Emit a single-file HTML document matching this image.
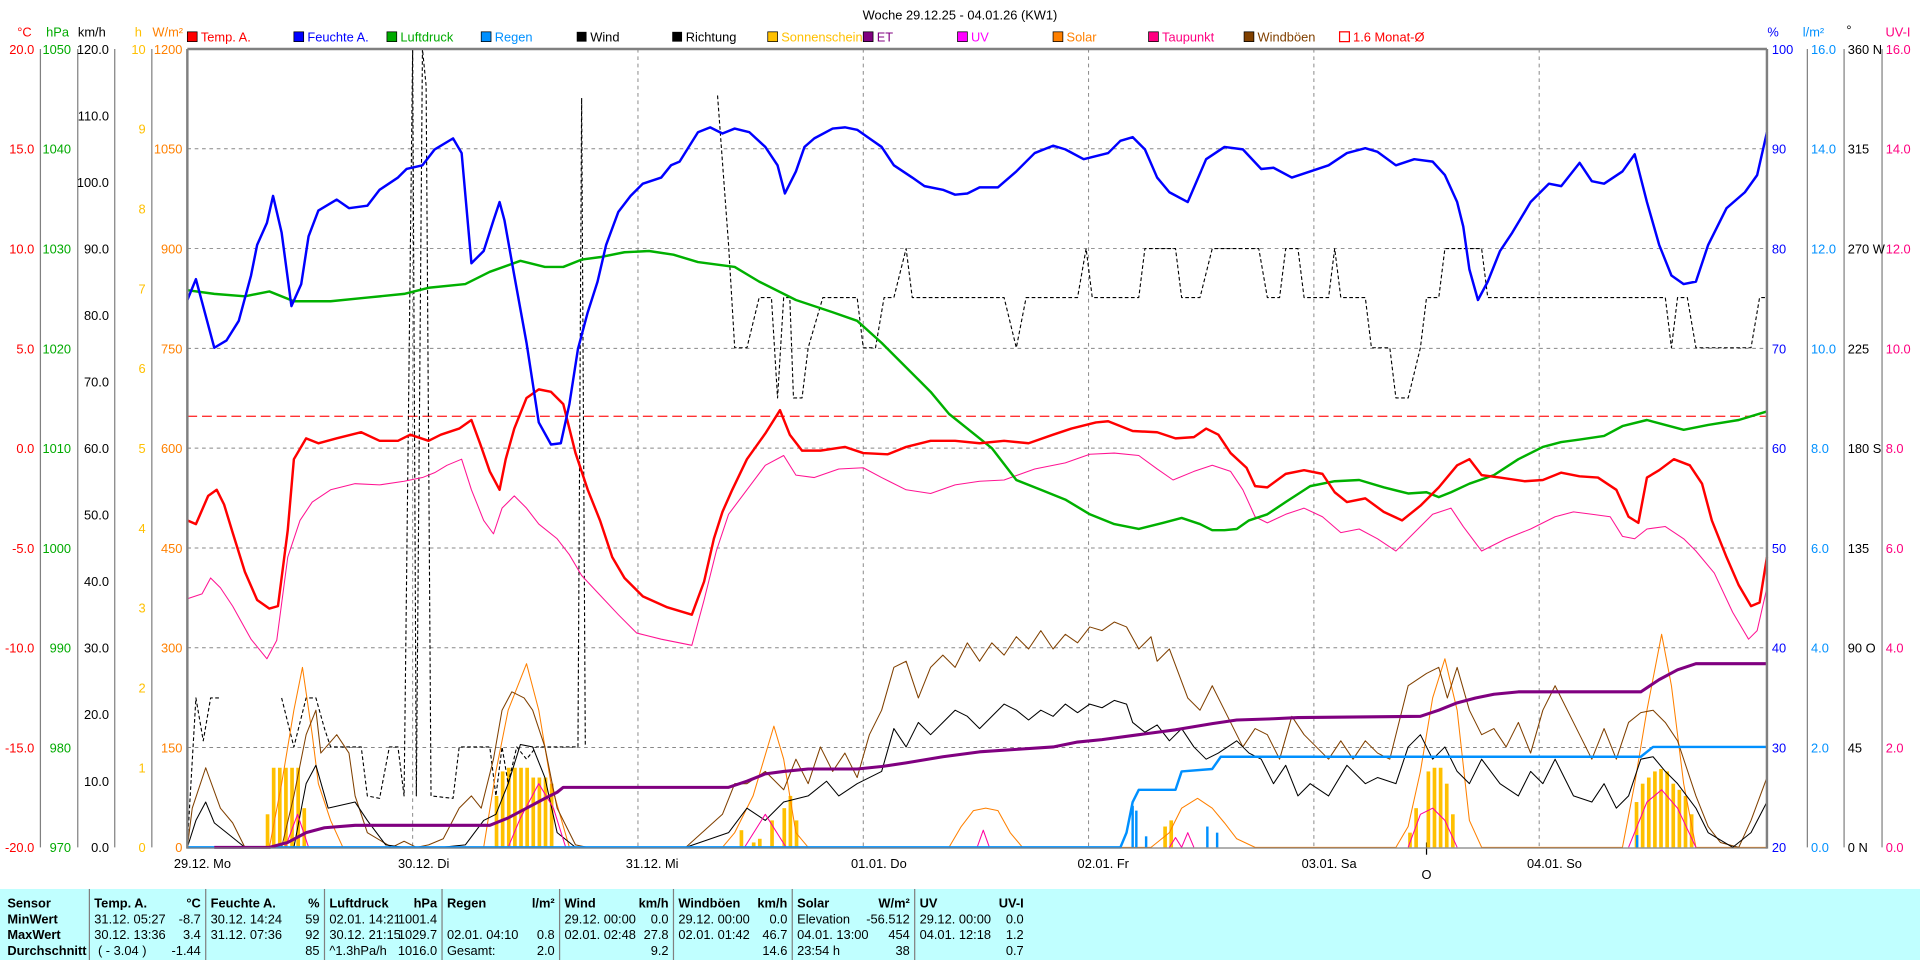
<!DOCTYPE html>
<html><head><meta charset="utf-8"><style>
html,body{margin:0;padding:0;background:#fff;width:1920px;height:960px;overflow:hidden}
svg{display:block}
text{font-family:"Liberation Sans",sans-serif;font-size:10.5px}
</style></head><body>
<svg width="1920" height="960" viewBox="0 0 1568 784" xmlns="http://www.w3.org/2000/svg">
<rect width="1568" height="784" fill="#fff"/>
<text x="784" y="16" text-anchor="middle" font-size="12" fill="#000">Woche 29.12.25 - 04.01.26 (KW1)</text>
<g font-size="10">
<text x="20" y="30" fill="#f00" text-anchor="middle">°C</text>
<text x="47" y="30" fill="#0a0" text-anchor="middle">hPa</text>
<text x="75" y="30" fill="#000" text-anchor="middle">km/h</text>
<text x="113" y="30" fill="#ffc000" text-anchor="middle">h</text>
<text x="137" y="30" fill="#ff8000" text-anchor="middle">W/m²</text>
<text x="1448" y="30" fill="#00f" text-anchor="middle">%</text>
<text x="1481" y="30" fill="#0090ff" text-anchor="middle">l/m²</text>
<text x="1510" y="28" fill="#000" text-anchor="middle">°</text>
<text x="1550" y="30" fill="#ff0080" text-anchor="middle">UV-I</text>
</g>
<g font-size="10">
<rect x="153" y="26" width="8" height="8" fill="#f00" stroke="#000" stroke-width=".6"/><text x="164" y="34" fill="#f00">Temp. A.</text>
<rect x="240" y="26" width="8" height="8" fill="#00f" stroke="#000" stroke-width=".6"/><text x="251" y="34" fill="#00f">Feuchte A.</text>
<rect x="316" y="26" width="8" height="8" fill="#0a0" stroke="#000" stroke-width=".6"/><text x="327" y="34" fill="#0a0">Luftdruck</text>
<rect x="393" y="26" width="8" height="8" fill="#0090ff" stroke="#000" stroke-width=".6"/><text x="404" y="34" fill="#0090ff">Regen</text>
<rect x="471" y="26" width="8" height="8" fill="#000"/><text x="482" y="34" fill="#000">Wind</text>
<rect x="549" y="26" width="8" height="8" fill="#000"/><text x="560" y="34" fill="#000">Richtung</text>
<rect x="627" y="26" width="8" height="8" fill="#ffc000" stroke="#000" stroke-width=".6"/><text x="638" y="34" fill="#ffc000">Sonnenschein</text>
<rect x="705" y="26" width="8" height="8" fill="#800080" stroke="#000" stroke-width=".6"/><text x="716" y="34" fill="#800080">ET</text>
<rect x="782" y="26" width="8" height="8" fill="#ff00ff" stroke="#000" stroke-width=".6"/><text x="793" y="34" fill="#ff00ff">UV</text>
<rect x="860" y="26" width="8" height="8" fill="#ff8000" stroke="#000" stroke-width=".6"/><text x="871" y="34" fill="#ff8000">Solar</text>
<rect x="938" y="26" width="8" height="8" fill="#ff0080" stroke="#000" stroke-width=".6"/><text x="949" y="34" fill="#ff0080">Taupunkt</text>
<rect x="1016" y="26" width="8" height="8" fill="#804000" stroke="#000" stroke-width=".6"/><text x="1027" y="34" fill="#804000">Windböen</text>
<rect x="1094" y="26" width="8" height="8" fill="#fff" stroke="#f00" stroke-width="1"/><text x="1105" y="34" fill="#f00">1.6 Monat-Ø</text>
</g>
<g stroke="#808080" stroke-width="1">
<line x1="33" y1="40" x2="33" y2="692"/><line x1="63.5" y1="40" x2="63.5" y2="692"/>
<line x1="93.7" y1="40" x2="93.7" y2="692"/><line x1="124" y1="40" x2="124" y2="692"/>
<line x1="1476" y1="40" x2="1476" y2="692"/><line x1="1506" y1="40" x2="1506" y2="692"/><line x1="1537" y1="40" x2="1537" y2="692"/>
</g>
<g stroke="#888" stroke-width="0.8" stroke-dasharray="3,3">
<line x1="153" y1="121.5" x2="1443" y2="121.5"/><line x1="153" y1="203" x2="1443" y2="203"/><line x1="153" y1="284.5" x2="1443" y2="284.5"/><line x1="153" y1="366" x2="1443" y2="366"/><line x1="153" y1="447.5" x2="1443" y2="447.5"/><line x1="153" y1="529" x2="1443" y2="529"/><line x1="153" y1="610.5" x2="1443" y2="610.5"/>
<line x1="337" y1="40" x2="337" y2="692"/><line x1="521" y1="40" x2="521" y2="692"/><line x1="705" y1="40" x2="705" y2="692"/><line x1="889" y1="40" x2="889" y2="692"/><line x1="1073" y1="40" x2="1073" y2="692"/><line x1="1257" y1="40" x2="1257" y2="692"/>
</g>
<line x1="153" y1="340" x2="1443" y2="340" stroke="#f33" stroke-width="1.1" stroke-dasharray="8,4"/>
<g text-anchor="end">
<g fill="#f00"><text x="28" y="44">20.0</text><text x="28" y="125.5">15.0</text><text x="28" y="207">10.0</text><text x="28" y="288.5">5.0</text><text x="28" y="370">0.0</text><text x="28" y="451.5">-5.0</text><text x="28" y="533">-10.0</text><text x="28" y="614.5">-15.0</text><text x="28" y="696">-20.0</text></g>
<g fill="#0a0"><text x="58" y="44">1050</text><text x="58" y="125.5">1040</text><text x="58" y="207">1030</text><text x="58" y="288.5">1020</text><text x="58" y="370">1010</text><text x="58" y="451.5">1000</text><text x="58" y="533">990</text><text x="58" y="614.5">980</text><text x="58" y="696">970</text></g>
<g fill="#000"><text x="89" y="44">120.0</text><text x="89" y="98.3">110.0</text><text x="89" y="152.7">100.0</text><text x="89" y="207">90.0</text><text x="89" y="261.3">80.0</text><text x="89" y="315.7">70.0</text><text x="89" y="370">60.0</text><text x="89" y="424.3">50.0</text><text x="89" y="478.7">40.0</text><text x="89" y="533">30.0</text><text x="89" y="587.3">20.0</text><text x="89" y="641.7">10.0</text><text x="89" y="696">0.0</text></g>
<g fill="#ffc000"><text x="119" y="44">10</text><text x="119" y="109.2">9</text><text x="119" y="174.4">8</text><text x="119" y="239.6">7</text><text x="119" y="304.8">6</text><text x="119" y="370">5</text><text x="119" y="435.2">4</text><text x="119" y="500.4">3</text><text x="119" y="565.6">2</text><text x="119" y="630.8">1</text><text x="119" y="696">0</text></g>
<g fill="#ff8000"><text x="149" y="44">1200</text><text x="149" y="125.5">1050</text><text x="149" y="207">900</text><text x="149" y="288.5">750</text><text x="149" y="370">600</text><text x="149" y="451.5">450</text><text x="149" y="533">300</text><text x="149" y="614.5">150</text><text x="149" y="696">0</text></g>
</g>
<g fill="#00f"><text x="1447" y="44">100</text><text x="1447" y="125.5">90</text><text x="1447" y="207">80</text><text x="1447" y="288.5">70</text><text x="1447" y="370">60</text><text x="1447" y="451.5">50</text><text x="1447" y="533">40</text><text x="1447" y="614.5">30</text><text x="1447" y="696">20</text></g>
<g fill="#0090ff"><text x="1479" y="44">16.0</text><text x="1479" y="125.5">14.0</text><text x="1479" y="207">12.0</text><text x="1479" y="288.5">10.0</text><text x="1479" y="370">8.0</text><text x="1479" y="451.5">6.0</text><text x="1479" y="533">4.0</text><text x="1479" y="614.5">2.0</text><text x="1479" y="696">0.0</text></g>
<g fill="#000"><text x="1509" y="44">360 N</text><text x="1509" y="125.5">315</text><text x="1509" y="207">270 W</text><text x="1509" y="288.5">225</text><text x="1509" y="370">180 S</text><text x="1509" y="451.5">135</text><text x="1509" y="533">90 O</text><text x="1509" y="614.5">45</text><text x="1509" y="696">0 N</text></g>
<g fill="#ff0080"><text x="1540" y="44">16.0</text><text x="1540" y="125.5">14.0</text><text x="1540" y="207">12.0</text><text x="1540" y="288.5">10.0</text><text x="1540" y="370">8.0</text><text x="1540" y="451.5">6.0</text><text x="1540" y="533">4.0</text><text x="1540" y="614.5">2.0</text><text x="1540" y="696">0.0</text></g>
<g fill="#000" font-size="10.5"><text x="142" y="709">29.12. Mo</text><text x="325" y="709">30.12. Di</text><text x="511" y="709">31.12. Mi</text><text x="695" y="709">01.01. Do</text><text x="880" y="709">02.01. Fr</text><text x="1063" y="709">03.01. Sa</text><text x="1247" y="709">04.01. So</text></g>
<line x1="1165" y1="688" x2="1165" y2="698" stroke="#000"/>
<text x="1165" y="718" text-anchor="middle" font-size="12">O</text>

<g fill="#ffc000">
<rect x="217" y="665" width="3" height="27"/><rect x="222" y="627" width="3" height="65"/><rect x="227" y="627" width="3" height="65"/><rect x="232" y="627" width="3" height="65"/><rect x="237" y="627" width="3" height="65"/><rect x="242" y="627" width="3" height="65"/><rect x="247" y="660" width="3" height="32"/>
<rect x="404" y="650" width="3" height="42"/><rect x="409" y="630" width="3" height="62"/><rect x="414" y="627" width="3" height="65"/><rect x="419" y="627" width="3" height="65"/><rect x="424" y="627" width="3" height="65"/><rect x="429" y="627" width="3" height="65"/><rect x="434" y="635" width="3" height="57"/><rect x="439" y="635" width="3" height="57"/><rect x="444" y="635" width="3" height="57"/><rect x="449" y="640" width="3" height="52"/>
<rect x="604" y="678" width="3" height="14"/><rect x="614" y="688" width="3" height="4"/><rect x="619" y="685" width="3" height="7"/><rect x="629" y="670" width="3" height="22"/><rect x="639" y="660" width="3" height="32"/><rect x="644" y="650" width="3" height="42"/><rect x="649" y="670" width="3" height="22"/>
<rect x="950" y="675" width="3" height="17"/><rect x="955" y="670" width="3" height="22"/>
<rect x="1150" y="680" width="3" height="12"/><rect x="1155" y="660" width="3" height="32"/><rect x="1165" y="630" width="3" height="62"/><rect x="1170" y="627" width="3" height="65"/><rect x="1175" y="627" width="3" height="65"/><rect x="1180" y="640" width="3" height="52"/><rect x="1185" y="665" width="3" height="27"/>
<rect x="1335" y="655" width="3" height="37"/><rect x="1340" y="640" width="3" height="52"/><rect x="1345" y="635" width="3" height="57"/><rect x="1350" y="630" width="3" height="62"/><rect x="1355" y="628" width="3" height="64"/><rect x="1360" y="630" width="3" height="62"/><rect x="1365" y="640" width="3" height="52"/><rect x="1370" y="645" width="3" height="47"/><rect x="1375" y="650" width="3" height="42"/><rect x="1380" y="665" width="3" height="27"/>
</g>
<g fill="none" stroke-linejoin="round">
<g stroke="#000" stroke-width="0.9" stroke-dasharray="3,2">
<polyline points="153,690 160,570 166,605 172,570 180,570"/>
<polyline points="230,570 235,590 240,610 250,570 258,570 265,595 270,610 295,610 300,650 310,652 318,610 325,610 330,650 337,40 340,650 345,40 348,70 352,650 370,652 375,610 400,610 405,650 410,610 415,640 422,610 430,620 438,610 472,610 475,80 478,610"/>
<polyline points="586,78 595,200 600,284 610,284 620,243 630,243 635,325 640,243 645,243 648,325 655,325 660,284 672,243 700,243 705,284 715,284 722,243 730,243 740,203 745,243 820,243 830,284 838,243 880,243 887,203 892,243 930,243 935,203 960,203 965,243 980,243 990,203 1028,203 1035,243 1045,243 1050,203 1060,203 1065,243 1085,243 1090,203 1095,243 1115,243 1120,284 1135,284 1140,325 1150,325 1160,284 1165,243 1175,243 1180,203 1210,203 1215,243 1360,243 1365,284 1370,243 1378,243 1385,284 1430,284 1437,243 1443,243"/>
</g>
<polyline stroke="#ff8000" stroke-width="0.85" points="153,692 220,692 230,640 240,580 247,545 255,600 260,640 270,670 280,692 395,692 405,630 415,580 430,542 440,580 450,640 465,692 590,692 600,680 615,650 632,593 640,620 650,680 660,692 775,692 785,675 795,662 805,660 815,662 825,680 835,692 940,692 955,680 965,660 978,652 990,660 1000,672 1010,685 1025,692 1140,692 1150,675 1160,630 1170,570 1180,538 1190,580 1200,670 1210,692 1325,692 1335,640 1345,580 1357,518 1365,560 1375,640 1385,692 1443,692"/>
<polyline stroke="#804000" stroke-width="0.85" points="153,692 157,660 168,627 180,660 190,672 200,692 230,692 240,650 250,600 258,580 262,615 275,600 285,615 290,650 300,680 320,692 330,687 340,692 350,690 362,685 375,660 385,650 393,660 403,620 410,580 418,565 428,570 435,580 445,610 455,660 470,690 480,692 560,692 590,665 600,640 610,640 625,630 640,645 650,620 660,640 670,610 680,630 690,615 700,635 710,600 720,580 730,545 740,540 750,570 760,545 770,535 780,545 790,525 800,540 810,525 820,535 830,520 840,530 850,515 860,530 870,518 880,525 890,512 900,515 910,508 920,512 930,530 940,520 945,540 955,530 970,570 980,580 990,560 1000,580 1015,610 1025,595 1035,600 1045,620 1055,585 1065,600 1075,610 1085,620 1095,605 1105,620 1115,605 1125,615 1135,620 1150,560 1165,550 1175,545 1182,570 1190,545 1200,580 1210,600 1220,595 1230,610 1240,590 1250,615 1260,580 1270,560 1285,590 1300,620 1310,595 1320,620 1330,590 1340,582 1350,580 1360,590 1370,605 1385,650 1395,675 1405,688 1420,692 1430,670 1443,635"/>
<polyline stroke="#000" stroke-width="0.85" points="153,692 160,670 168,655 175,672 185,680 200,692 240,692 250,640 258,625 268,660 290,655 300,670 315,690 330,692 360,692 380,690 395,670 405,665 415,640 425,608 435,610 445,635 455,680 470,692 560,692 595,680 610,660 625,670 640,655 660,650 675,638 685,650 700,640 720,630 730,595 740,610 750,590 760,600 770,590 780,580 790,585 800,595 810,585 820,575 830,580 840,588 850,580 860,585 870,575 880,582 890,575 900,578 910,572 920,575 925,590 935,598 945,592 955,605 965,595 975,610 985,620 995,615 1010,605 1020,615 1030,620 1040,640 1050,625 1060,650 1070,640 1085,650 1100,625 1115,640 1125,635 1140,640 1150,610 1160,600 1170,620 1180,610 1190,630 1200,640 1210,620 1225,640 1240,650 1250,630 1260,640 1270,620 1285,650 1300,655 1310,640 1320,660 1330,650 1340,620 1350,618 1360,630 1370,640 1385,660 1395,680 1415,692 1430,680 1443,655"/>
<g stroke="#ff00a0" stroke-width="0.85">
<polyline points="233,692 243,665 252,692"/><polyline points="415,692 425,668 440,640 452,660 462,692"/><polyline points="608,692 625,665 642,692"/><polyline points="798,692 803,678 808,692"/><polyline points="955,692 960,684 965,692 970,680 975,692"/><polyline points="1150,692 1160,665 1170,660 1180,670 1190,692"/><polyline points="1330,692 1345,655 1357,645 1370,660 1385,692"/>
</g>
<polyline stroke="#0090ff" stroke-width="2" points="153,692 915,692 920,680 925,655 930,645 960,645 965,630 990,628 997,618 1340,618 1350,610 1443,610"/>
<g stroke="#0090ff" stroke-width="2"><line x1="925" y1="692" x2="925" y2="658"/><line x1="928" y1="692" x2="928" y2="662"/><line x1="936" y1="692" x2="936" y2="683"/><line x1="986" y1="692" x2="986" y2="675"/><line x1="994" y1="692" x2="994" y2="680"/><line x1="1337" y1="692" x2="1337" y2="682"/></g>
<polyline stroke="#800080" stroke-width="2.5" points="175,692 220,692 235,688 250,680 265,676 290,674 400,674 415,668 430,660 445,652 455,647 460,643 595,643 610,638 625,632 640,630 660,628 700,628 720,626 740,623 770,618 800,614 830,612 860,610 880,606 900,604 930,600 960,596 990,591 1010,588 1040,587 1060,586 1160,585 1175,580 1190,574 1205,570 1220,567 1240,565 1340,565 1355,555 1370,547 1385,542 1443,542"/>
<polyline stroke="#ff1493" stroke-width="0.85" points="153,489 165,485 172,472 180,480 190,495 205,522 218,538 226,523 235,455 245,425 255,410 270,400 290,395 310,396 330,393 345,390 355,386 365,380 377,375 385,400 395,425 403,436 410,415 420,405 430,415 440,428 455,440 465,453 475,470 490,486 505,502 520,517 540,522 565,527 575,490 585,450 595,420 610,400 625,380 640,372 650,388 665,390 685,383 705,382 720,390 740,400 760,403 780,396 800,393 820,392 845,383 870,378 890,371 910,370 930,372 945,383 958,392 975,385 990,380 1005,385 1015,400 1025,422 1035,427 1050,420 1065,415 1080,422 1095,435 1110,432 1125,440 1140,450 1155,435 1170,420 1185,415 1195,430 1210,450 1230,440 1250,432 1270,422 1285,418 1300,420 1315,422 1325,438 1335,440 1345,432 1360,430 1375,440 1385,450 1400,468 1415,500 1428,522 1435,515 1443,480"/>
<polyline stroke="#00b000" stroke-width="2" points="153,237 175,240 200,242 220,238 240,246 270,246 300,243 330,240 350,235 380,232 400,222 425,213 445,218 460,218 475,212 490,210 510,206 530,205 550,208 570,214 600,218 620,230 650,245 680,255 700,262 720,280 740,300 760,320 775,338 790,350 810,366 830,392 850,400 870,408 890,420 910,428 930,432 950,427 965,423 980,428 990,433 1000,433 1010,432 1020,425 1035,420 1050,410 1070,397 1090,393 1110,392 1130,398 1150,403 1165,402 1175,406 1185,402 1200,395 1220,388 1240,375 1260,365 1275,361 1290,359 1310,356 1325,348 1345,343 1360,347 1375,351 1395,347 1420,343 1443,336"/>
<polyline stroke="#f00" stroke-width="2" points="153,425 160,428 170,405 177,400 183,412 190,435 200,467 210,490 220,497 227,495 235,433 240,375 250,358 260,362 275,358 295,353 310,360 325,360 335,355 350,360 360,355 375,350 385,343 392,362 400,385 408,400 413,375 420,350 430,325 440,318 450,320 460,330 470,370 480,400 490,425 500,455 510,472 525,487 545,496 565,502 575,475 583,440 590,418 598,400 610,375 625,354 637,335 645,355 655,368 670,368 690,365 705,370 725,371 740,365 760,360 780,360 800,362 820,360 840,362 860,355 875,350 895,345 905,344 925,352 945,353 960,358 975,357 985,350 995,355 1005,370 1018,382 1025,397 1035,398 1050,387 1065,384 1080,387 1090,402 1100,410 1115,407 1130,418 1145,425 1160,413 1175,398 1190,380 1200,375 1210,388 1225,390 1245,393 1260,392 1275,386 1290,389 1305,390 1320,400 1330,422 1338,427 1345,390 1355,384 1367,375 1380,380 1390,395 1398,425 1410,455 1420,478 1430,495 1437,492 1443,455"/>
<polyline stroke="#0000ff" stroke-width="2" points="153,245 160,228 175,284 185,278 195,262 205,225 210,200 218,182 223,160 230,190 238,250 246,232 252,193 260,172 275,163 285,170 300,168 310,155 325,145 332,138 345,135 355,122 370,113 377,125 385,215 395,205 403,180 408,165 412,180 420,225 430,280 440,345 450,363 458,362 465,330 472,285 480,255 488,230 495,200 505,173 515,160 525,150 540,145 548,135 555,132 570,108 580,104 590,109 600,105 612,108 625,120 635,135 641,158 650,140 657,120 665,113 680,105 690,104 700,106 710,113 720,120 730,135 745,145 755,152 770,155 780,159 790,158 800,153 815,153 830,140 845,125 860,119 870,122 885,130 905,125 915,115 925,112 935,122 945,145 955,157 970,165 985,130 1000,120 1015,122 1030,138 1040,137 1055,145 1070,140 1085,135 1100,125 1115,121 1125,124 1140,135 1155,130 1170,132 1180,143 1190,165 1195,185 1200,220 1207,245 1215,230 1225,205 1235,190 1250,165 1265,150 1275,152 1290,133 1300,148 1310,150 1325,140 1335,126 1345,165 1355,200 1365,225 1375,232 1385,230 1395,200 1410,170 1425,157 1435,143 1443,108"/>
</g>
<g stroke="#808080" stroke-width="2" fill="none">
<line x1="153" y1="40" x2="1443" y2="40"/><line x1="153" y1="40" x2="153" y2="693"/><line x1="1443" y1="40" x2="1443" y2="693"/><line x1="153" y1="692.5" x2="1443" y2="692.5" stroke-width="1"/>
</g>
<rect x="0" y="726" width="1568" height="58" fill="#c0ffff"/>
<g stroke="#808080" stroke-width="1"><line x1="73" y1="726" x2="73" y2="784"/><line x1="168" y1="726" x2="168" y2="784"/><line x1="265" y1="726" x2="265" y2="784"/><line x1="361" y1="726" x2="361" y2="784"/><line x1="457" y1="726" x2="457" y2="784"/><line x1="550" y1="726" x2="550" y2="784"/><line x1="647" y1="726" x2="647" y2="784"/><line x1="747" y1="726" x2="747" y2="784"/></g>
<g font-size="9.3" fill="#000">
<g font-weight="bold"><text x="6" y="741">Sensor</text><text x="6" y="754">MinWert</text><text x="6" y="767">MaxWert</text><text x="6" y="780">Durchschnitt</text>
<text x="77" y="741">Temp. A.</text><text x="164" y="741" text-anchor="end">°C</text>
<text x="172" y="741">Feuchte A.</text><text x="261" y="741" text-anchor="end">%</text>
<text x="269" y="741">Luftdruck</text><text x="357" y="741" text-anchor="end">hPa</text>
<text x="365" y="741">Regen</text><text x="453" y="741" text-anchor="end">l/m²</text>
<text x="461" y="741">Wind</text><text x="546" y="741" text-anchor="end">km/h</text>
<text x="554" y="741">Windböen</text><text x="643" y="741" text-anchor="end">km/h</text>
<text x="651" y="741">Solar</text><text x="743" y="741" text-anchor="end">W/m²</text>
<text x="751" y="741">UV</text><text x="836" y="741" text-anchor="end">UV-I</text></g>
<text x="77" y="754">31.12. 05:27</text><text x="164" y="754" text-anchor="end">-8.7</text>
<text x="77" y="767">30.12. 13:36</text><text x="164" y="767" text-anchor="end">3.4</text>
<text x="80" y="780">( - 3.04 )</text><text x="164" y="780" text-anchor="end">-1.44</text>
<text x="172" y="754">30.12. 14:24</text><text x="261" y="754" text-anchor="end">59</text>
<text x="172" y="767">31.12. 07:36</text><text x="261" y="767" text-anchor="end">92</text>
<text x="261" y="780" text-anchor="end">85</text>
<text x="269" y="754">02.01. 14:21</text><text x="357" y="754" text-anchor="end">1001.4</text>
<text x="269" y="767">30.12. 21:15</text><text x="357" y="767" text-anchor="end">1029.7</text>
<text x="269" y="780">^1.3hPa/h</text><text x="357" y="780" text-anchor="end">1016.0</text>
<text x="365" y="767">02.01. 04:10</text><text x="453" y="767" text-anchor="end">0.8</text>
<text x="365" y="780">Gesamt:</text><text x="453" y="780" text-anchor="end">2.0</text>
<text x="461" y="754">29.12. 00:00</text><text x="546" y="754" text-anchor="end">0.0</text>
<text x="461" y="767">02.01. 02:48</text><text x="546" y="767" text-anchor="end">27.8</text>
<text x="546" y="780" text-anchor="end">9.2</text>
<text x="554" y="754">29.12. 00:00</text><text x="643" y="754" text-anchor="end">0.0</text>
<text x="554" y="767">02.01. 01:42</text><text x="643" y="767" text-anchor="end">46.7</text>
<text x="643" y="780" text-anchor="end">14.6</text>
<text x="651" y="754">Elevation</text><text x="743" y="754" text-anchor="end">-56.512</text>
<text x="651" y="767">04.01. 13:00</text><text x="743" y="767" text-anchor="end">454</text>
<text x="651" y="780">23:54 h</text><text x="743" y="780" text-anchor="end">38</text>
<text x="751" y="754">29.12. 00:00</text><text x="836" y="754" text-anchor="end">0.0</text>
<text x="751" y="767">04.01. 12:18</text><text x="836" y="767" text-anchor="end">1.2</text>
<text x="836" y="780" text-anchor="end">0.7</text>
</g>
</svg>
</body></html>
